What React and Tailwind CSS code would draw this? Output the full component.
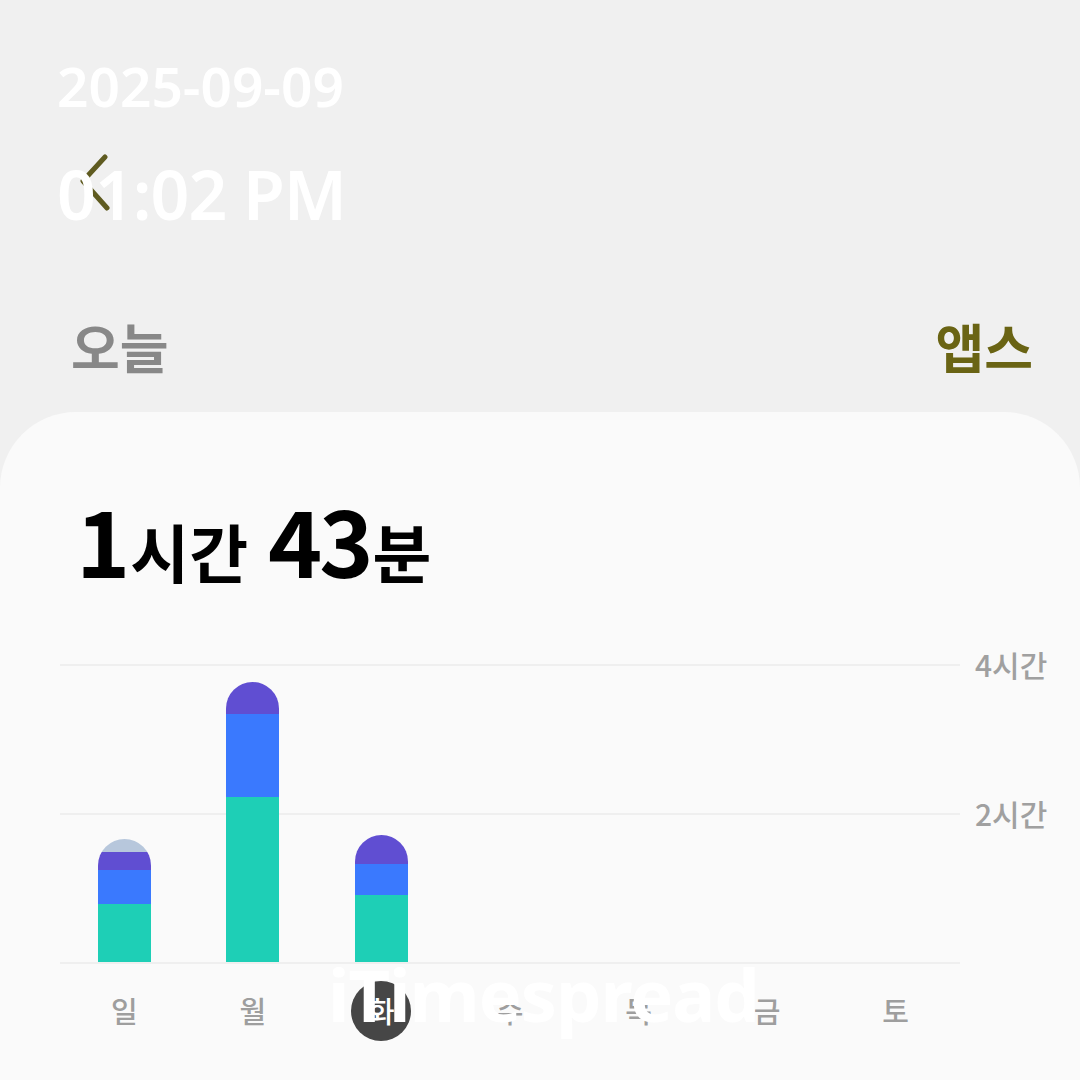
const bars = [
  { label: '일', segs: [['h-[13px]', 'bg-[#b7c7dc]'], ['h-[18px]', 'bg-[#604ed2]'], ['h-[34px]', 'bg-[#3a79fe]'], ['h-[58px]', 'bg-[#1ecfb6]']] },
  { label: '월', segs: [['h-[32px]', 'bg-[#604ed2]'], ['h-[83px]', 'bg-[#3a79fe]'], ['h-[165px]', 'bg-[#1ecfb6]']] },
  { label: '화', segs: [['h-[29px]', 'bg-[#604ed2]'], ['h-[31px]', 'bg-[#3a79fe]'], ['h-[67px]', 'bg-[#1ecfb6]']] },
  { label: '수', segs: [] },
  { label: '목', segs: [] },
  { label: '금', segs: [] },
  { label: '토', segs: [] },
];

function GridRow({ label }) {
  return (
    <div className="h-[149px] flex items-start">
      <div className="w-[900px] border-t-2 border-[#efefef]"></div>
      {label && (
        <span className="ml-[15px] -mt-[19px] text-[30px] leading-[38px] font-medium text-[#a0a0a0]">{label}</span>
      )}
    </div>
  );
}

export default function App() {
  return (
    <div className="w-[1080px] h-[1080px] bg-[#f0f0f0] relative overflow-hidden flex flex-col font-['Noto_Sans_CJK_KR',sans-serif]">
      {/* header */}
      <div className="h-[412px] flex flex-col">
        <div className="pt-[154px] pl-[80px]">
          <svg width="32" height="58" viewBox="0 0 32 58" fill="none">
            <path d="M25 3 L3 27 L27 54" stroke="#5f5b20" strokeWidth="5" strokeLinecap="round" strokeLinejoin="round" />
          </svg>
        </div>
        <div className="mt-[100px] flex justify-between items-center pl-[71px] pr-[47px] h-[70px]">
          <span className="text-[53px] font-bold text-[#888888]">오늘</span>
          <span className="text-[53px] font-bold text-[#6a6414]">앱스</span>
        </div>
      </div>

      {/* card */}
      <div className="flex-1 bg-[#fafafa] rounded-t-[76px] flex flex-col">
        <div className="pl-[76px] pt-[80px] flex items-baseline font-bold text-black leading-none">
          <span className="text-[92px] tracking-[-4px]">1</span>
          <span className="text-[64px] ml-[4px]">시간</span>
          <span className="text-[92px] tracking-[-3px] ml-[20px]">43</span>
          <span className="text-[64px] ml-[2px]">분</span>
        </div>

        <div className="mt-[80px] ml-[60px] relative">
          <GridRow label="4시간" />
          <GridRow label="2시간" />
          <div className="w-[900px] border-t-2 border-[#efefef]"></div>
          <div className="absolute left-0 bottom-[2px] w-[900px] h-[298px] grid grid-cols-7 items-end justify-items-center">
            {bars.map((b) => (
              <div key={b.label} className="w-[53px] flex flex-col rounded-t-full overflow-hidden">
                {b.segs.map(([h, c], i) => (
                  <div key={i} className={`${h} ${c}`}></div>
                ))}
              </div>
            ))}
          </div>
        </div>

        <div className="ml-[60px] w-[900px] mt-[17px] grid grid-cols-7 justify-items-center">
          {bars.map((b) =>
            b.label === '화' ? (
              <div key={b.label} className="w-[60px] h-[60px] rounded-full bg-[#464646] text-white text-[29px] font-medium flex items-center justify-center">
                {b.label}
              </div>
            ) : (
              <div key={b.label} className="h-[60px] flex items-center text-[29px] font-medium text-[#9e9e9e]">
                {b.label}
              </div>
            )
          )}
        </div>
      </div>

      {/* overlay: date / time stamp */}
      <div className="absolute left-[57px] top-[58px] flex flex-col font-['Noto_Sans',sans-serif] font-semibold text-white leading-none">
        <span className="text-[55px]">2025-09-09</span>
        <span className="text-[68px] mt-[47px] tracking-[-1px]">01:02 PM</span>
      </div>

      {/* overlay: watermark */}
      <div className="absolute left-[328px] top-[958px] font-['Noto_Sans',sans-serif] font-bold text-white text-[72px] leading-none tracking-[-1px]">
        iTimespread
      </div>
    </div>
  );
}
